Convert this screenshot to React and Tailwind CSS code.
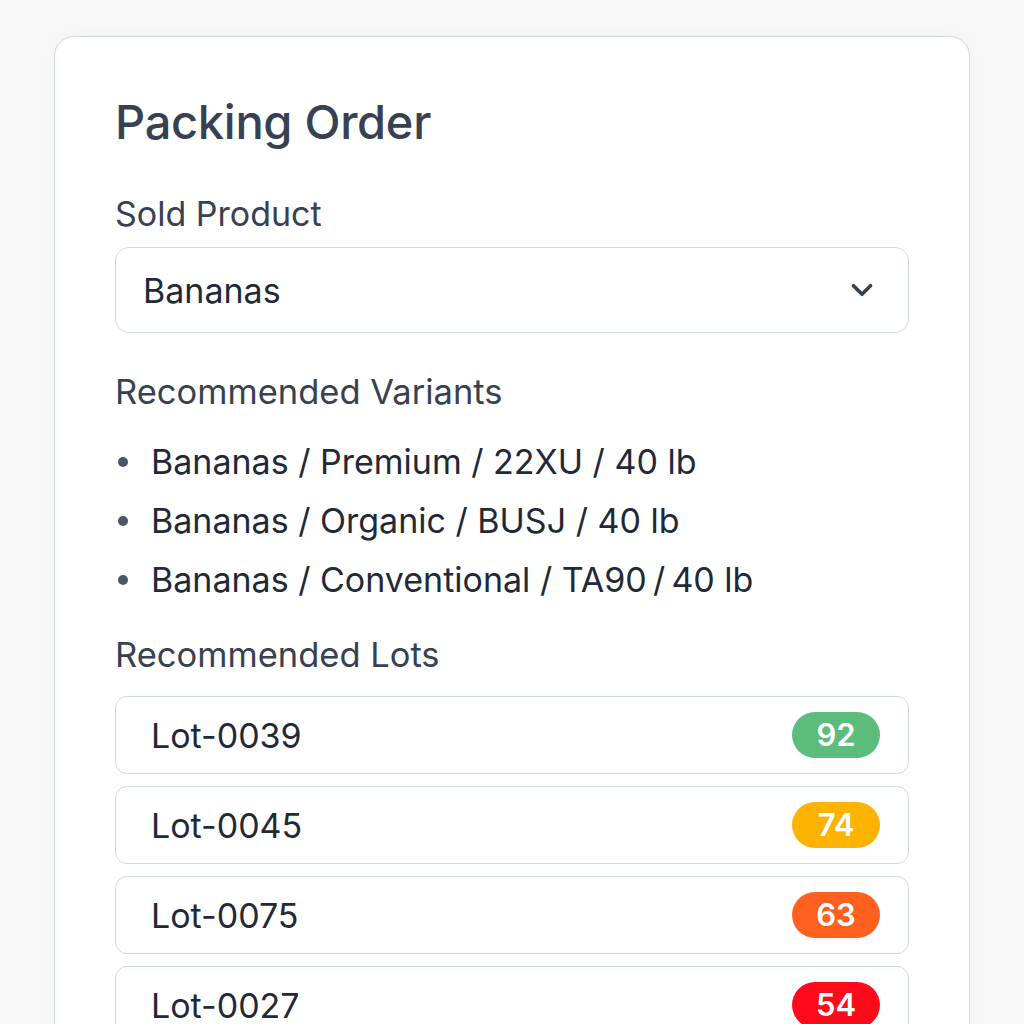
import React from "react";

const variants = [
  "Bananas / Premium / 22XU / 40 lb",
  "Bananas / Organic / BUSJ / 40 lb",
  "Bananas / Conventional / TA90\u2009/\u200940 lb",
];

const lots = [
  { id: "Lot-0039", score: 92, color: "bg-[#5cbc7c]" },
  { id: "Lot-0045", score: 74, color: "bg-[#fdb400]" },
  { id: "Lot-0075", score: 63, color: "bg-[#ff5f1f]" },
  { id: "Lot-0027", score: 54, color: "bg-[#ff0a1a]" },
];

export default function App() {
  return (
    <div className="h-[1024px] w-[1024px] overflow-hidden bg-[#f8f8f8] pt-[36px] pl-[54px] font-['Inter',sans-serif]">
      <div className="w-[916px] h-[1100px] rounded-[20px] border border-[#d0d9e8] bg-white px-[60px] pt-[55px] shadow-[0_0_24px_rgba(0,0,0,0.03)]">
        <h1 className="text-[47px] leading-[60px] font-medium text-[#374151] tracking-[-0.3px]">Packing Order</h1>
        <div className="mt-[42px] text-[34px] leading-[40px] text-[#374151]">Sold Product</div>
        <div className="mt-[13px] flex h-[86px] items-center justify-between rounded-[14px] border border-[#d0d9e8] pl-[27px] pr-[29px]">
          <span className="text-[34px] text-[#1f2937]">Bananas</span>
          <svg width="34" height="34" viewBox="0 0 24 24" fill="none" stroke="#374151" strokeWidth="2.6" strokeLinecap="round" strokeLinejoin="round">
            <path d="M6 9l6 6 6-6" />
          </svg>
        </div>
        <div className="mt-[39px] text-[34.5px] leading-[40px] text-[#374151]">Recommended Variants</div>
        <ul className="mt-[20px] flex flex-col">
          {variants.map((v) => (
            <li key={v} className="flex h-[59px] items-center text-[34px] text-[#1f2937]">
              <span className="ml-[3px] mr-[23px] h-[10px] w-[10px] rounded-full bg-[#4b5563]" />
              {v}
            </li>
          ))}
        </ul>
        <div className="mt-[26px] text-[34.5px] leading-[40px] text-[#374151]">Recommended Lots</div>
        <div className="mt-[21px] flex flex-col gap-[12px]">
          {lots.map((l) => (
            <div key={l.id} className="flex h-[78px] items-center justify-between rounded-[12px] border border-[#d0d9e8] pl-[35px] pr-[28px]">
              <span className="text-[34px] text-[#1f2937]">{l.id}</span>
              <span className={`flex h-[46px] w-[88px] items-center justify-center rounded-full ${l.color} text-[31px] font-semibold text-white`}>
                {l.score}
              </span>
            </div>
          ))}
        </div>
      </div>
    </div>
  );
}
